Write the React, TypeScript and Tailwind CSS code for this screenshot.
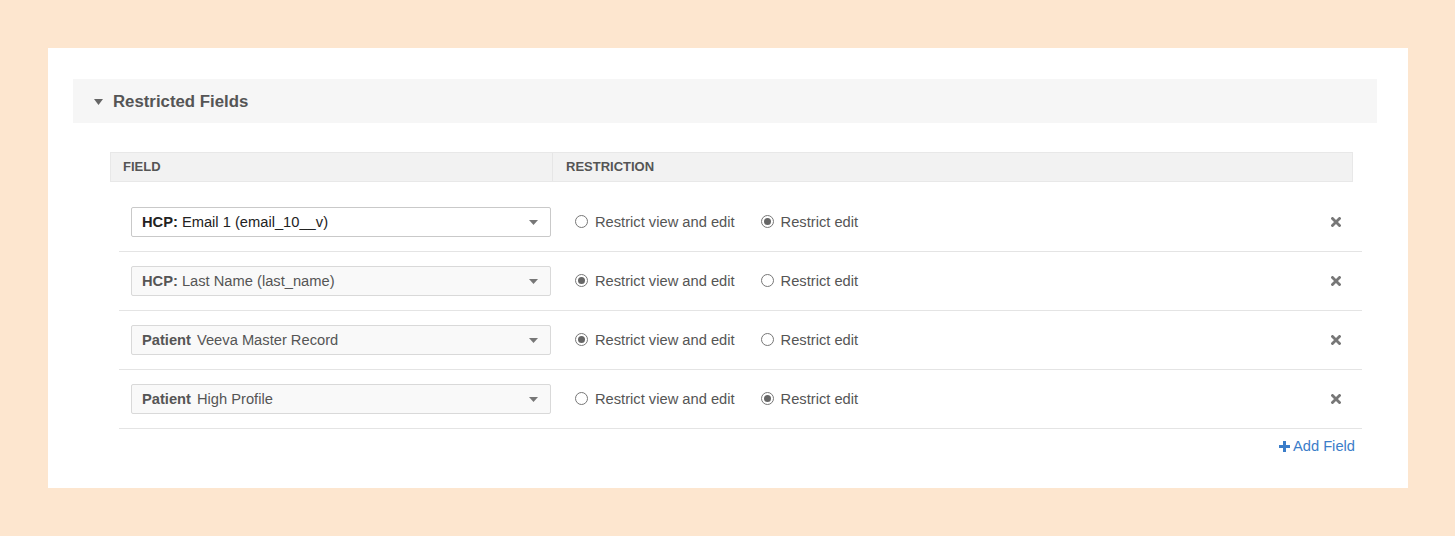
import React from "react";

type Row = {
  prefix: string;
  label: string;
  restriction: "view" | "edit";
  active?: boolean;
};

const rows: Row[] = [
  { prefix: "HCP:", label: "Email 1 (email_10__v)", restriction: "edit", active: true },
  { prefix: "HCP:", label: "Last Name (last_name)", restriction: "view" },
  { prefix: "Patient", label: "Veeva Master Record", restriction: "view" },
  { prefix: "Patient", label: "High Profile", restriction: "edit" },
];

function Radio({ checked, label }: { checked: boolean; label: string }) {
  return (
    <label className="flex items-center gap-[7px] text-[14.7px] text-[#555]">
      <span className="flex h-[13px] w-[13px] items-center justify-center rounded-full border border-[#777] bg-white">
        {checked && <span className="h-[7px] w-[7px] rounded-full bg-[#666]" />}
      </span>
      {label}
    </label>
  );
}

export default function App() {
  return (
    <div
      className="min-h-[536px] w-full bg-[#fde6cf] p-[48px]"
      style={{ fontFamily: '"Liberation Sans", Arial, sans-serif' }}
    >
      <div className="h-[440px] w-[1360px] bg-white pl-[25px] pr-[31px] pt-[31px]">
        {/* Section header */}
        <div className="flex h-[44px] items-center bg-[#f6f6f6] pl-[21px]">
          <svg width="9" height="6" viewBox="0 0 9 6" className="mr-[10px] mt-[1px]">
            <path d="M0 0h9L4.5 6z" fill="#666" />
          </svg>
          <span className="mt-[1px] text-[16.8px] font-bold text-[#555]">Restricted Fields</span>
        </div>

        <div className="ml-[37px] mt-[29px] w-[1243px]">
          {/* Table header */}
          <div className="flex h-[30px] items-center border border-[#e8e8e8] bg-[#f2f2f2] text-[13px] font-bold text-[#555]">
            <div className="flex h-full w-[442px] items-center border-r border-[#e6e6e6] pl-[12px]">FIELD</div>
            <div className="pl-[13px]">RESTRICTION</div>
          </div>

          {/* Rows */}
          <div className="ml-[9px] w-[1243px] pt-[11px]">
            {rows.map((r, i) => (
              <div key={i} className="flex h-[59px] items-center border-b border-[#e4e4e4] pl-[12px] pr-[21px]">
                <div
                  className={
                    r.active
                      ? "flex h-[30px] w-[420px] items-center justify-between rounded-[2px] border border-[#c9c9c9] bg-white pl-[10px] pr-[12px] text-[14.7px] text-[#222]"
                      : "flex h-[30px] w-[420px] items-center justify-between rounded-[2px] border border-[#d9d9d9] bg-[#f9f9f9] pl-[10px] pr-[12px] text-[14.7px] text-[#555]"
                  }
                >
                  <span>
                    <span className="font-bold">{r.prefix}</span>
                    <span className={r.prefix === "Patient" ? "ml-[6px]" : "ml-[4px]"}>{r.label}</span>
                  </span>
                  <svg width="9" height="5" viewBox="0 0 9 5">
                    <path d="M0 0h9L4.5 5z" fill="#777" />
                  </svg>
                </div>
                <div className="ml-[24px] flex items-center gap-[26px]">
                  <Radio checked={r.restriction === "view"} label="Restrict view and edit" />
                  <Radio checked={r.restriction === "edit"} label="Restrict edit" />
                </div>
                <svg width="10" height="10" viewBox="0 0 10 10" className="ml-auto">
                  <path d="M1.5 1.5l7 7M8.5 1.5l-7 7" stroke="#777" strokeWidth="2.8" strokeLinecap="square" />
                </svg>
              </div>
            ))}
            <div className="flex justify-end pr-[7px] pt-[6px]">
              <button className="flex items-center gap-[3px] text-[14.7px] text-[#3b7dc9]">
                <svg width="11" height="11" viewBox="0 0 11 11">
                  <path d="M5.5 0v11M0 5.5h11" stroke="#3b7dc9" strokeWidth="3" />
                </svg>
                Add Field
              </button>
            </div>
          </div>
        </div>
      </div>
    </div>
  );
}
